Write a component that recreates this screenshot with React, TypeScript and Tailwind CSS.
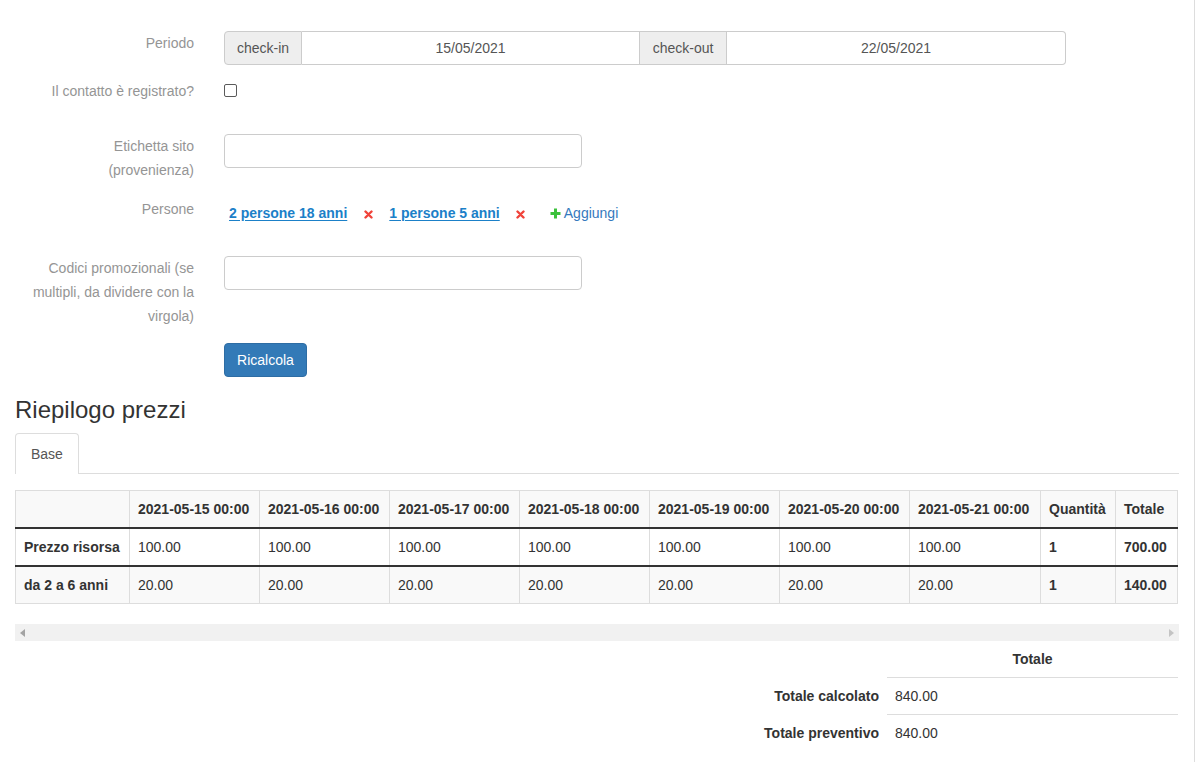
import React from 'react';

const dates = [
  '2021-05-15 00:00',
  '2021-05-16 00:00',
  '2021-05-17 00:00',
  '2021-05-18 00:00',
  '2021-05-19 00:00',
  '2021-05-20 00:00',
  '2021-05-21 00:00',
];

const rows = [
  { label: 'Prezzo risorsa', price: '100.00', qty: '1', total: '700.00', striped: false, thick: true },
  { label: 'da 2 a 6 anni', price: '20.00', qty: '1', total: '140.00', striped: true, thick: false },
];

const RemoveIcon = () => (
  <svg width="9" height="9" viewBox="0 0 9 9" className="block">
    <path d="M1.5 1.5 L7.5 7.5 M7.5 1.5 L1.5 7.5" stroke="#f0433a" strokeWidth="2.4" strokeLinecap="round" />
  </svg>
);

const PlusIcon = () => (
  <svg width="11" height="11" viewBox="0 0 11 11" className="block">
    <path d="M5.5 0.5 V10.5 M0.5 5.5 H10.5" stroke="#3cc13c" strokeWidth="3" />
  </svg>
);

const FormRow: React.FC<{ label?: React.ReactNode; className?: string; children: React.ReactNode }> = ({
  label,
  className = '',
  children,
}) => (
  <div className={`flex items-start ${className}`}>
    <div className="w-[179px] shrink-0 text-right leading-[24px] text-[#959595]">{label}</div>
    <div className="ml-[30px]">{children}</div>
  </div>
);

const App: React.FC = () => {
  const cell = 'border border-[#ddd] px-[8px] py-[8px] leading-[20px] text-left';

  return (
    <div
      className="w-[1195px] min-h-[762px] border-r border-[#ddd] bg-white pl-[15px] pr-[16px] text-[14px] text-[#333]"
      style={{ fontFamily: '"Liberation Sans", Arial, sans-serif' }}
    >
      {/* form */}
      <FormRow label="Periodo" className="pt-[31px]">
        <div className="flex h-[34px] w-[842px] text-[#555]">
          <div className="flex w-[78px] items-center justify-center rounded-l-[4px] border border-[#ccc] bg-[#eee]">
            check-in
          </div>
          <div className="flex w-[338px] items-center justify-center border-y border-r border-[#ccc]">15/05/2021</div>
          <div className="flex w-[87px] items-center justify-center border-y border-r border-[#ccc] bg-[#eee]">
            check-out
          </div>
          <div className="flex w-[339px] items-center justify-center rounded-r-[4px] border-y border-r border-[#ccc]">
            22/05/2021
          </div>
        </div>
      </FormRow>

      <FormRow label="Il contatto è registrato?" className="mt-[14px] h-[40px]">
        <div className="mt-[5px] h-[13px] w-[13px] rounded-[2px] border border-[#5a5a5a] bg-white" />
      </FormRow>

      <FormRow
        label={
          <>
            Etichetta sito
            <br />
            (provenienza)
          </>
        }
        className="mt-[15px]"
      >
        <div className="h-[34px] w-[358px] rounded-[4px] border border-[#ccc]" />
      </FormRow>

      <FormRow label="Persone" className="mt-[15px] h-[44px]">
        <div className="flex items-center pt-[6px] leading-[20px]">
          <a className="ml-[5px] font-bold text-[#1b80c8] underline underline-offset-2">2 persone 18 anni</a>
          <span className="ml-[17px] mt-[2px]">
            <RemoveIcon />
          </span>
          <a className="ml-[16px] font-bold text-[#1b80c8] underline underline-offset-2">1 persone 5 anni</a>
          <span className="ml-[16px] mt-[2px]">
            <RemoveIcon />
          </span>
          <span className="ml-[25px]">
            <PlusIcon />
          </span>
          <a className="ml-[3px] text-[#3579bd]">Aggiungi</a>
        </div>
      </FormRow>

      <FormRow label="Codici promozionali (se multipli, da dividere con la virgola)" className="mt-[15px]">
        <div className="h-[34px] w-[358px] rounded-[4px] border border-[#ccc]" />
      </FormRow>

      <FormRow className="mt-[15px]">
        <button className="h-[34px] w-[83px] rounded-[4px] border border-[#2e6da4] bg-[#337ab7] text-white">
          Ricalcola
        </button>
      </FormRow>

      {/* summary */}
      <h3 className="mt-[20px] mb-[10px] text-[24px] leading-[26px] font-normal text-[#333]">Riepilogo prezzi</h3>

      <div className="flex w-[1164px] border-b border-[#ddd]">
        <div className="-mb-px rounded-t-[4px] border border-b-0 border-[#ddd] bg-white px-[15px] py-[10px] leading-[20px] text-[#555]">
          Base
        </div>
      </div>

      <div className="mt-[16px] w-[1164px]">
        <table className="w-[1163px] table-fixed border-collapse">
          <colgroup>
            <col className="w-[114px]" />
            {dates.map((d, i) => (
              <col key={d} className={i === 6 ? 'w-[131px]' : 'w-[130px]'} />
            ))}
            <col className="w-[75px]" />
            <col className="w-[62px]" />
          </colgroup>
          <thead>
            <tr className="bg-[#f9f9f9]">
              <th className={`${cell} border-b-2 border-b-[#333]`} />
              {dates.map((d) => (
                <th key={d} className={`${cell} border-b-2 border-b-[#333] font-bold whitespace-nowrap`}>
                  {d}
                </th>
              ))}
              <th className={`${cell} border-b-2 border-b-[#333] font-bold`}>Quantità</th>
              <th className={`${cell} border-b-2 border-b-[#333] font-bold`}>Totale</th>
            </tr>
          </thead>
          <tbody>
            {rows.map((r) => {
              const b = r.thick ? 'border-b-2 border-b-[#333]' : '';
              return (
                <tr key={r.label} className={r.striped ? 'bg-[#f9f9f9]' : 'bg-white'}>
                  <td className={`${cell} ${b} font-bold whitespace-nowrap`}>{r.label}</td>
                  {dates.map((d) => (
                    <td key={d} className={`${cell} ${b}`}>
                      {r.price}
                    </td>
                  ))}
                  <td className={`${cell} ${b} font-bold`}>{r.qty}</td>
                  <td className={`${cell} ${b} font-bold`}>{r.total}</td>
                </tr>
              );
            })}
          </tbody>
        </table>

        {/* horizontal scrollbar */}
        <div className="mt-[20px] flex h-[17px] items-center justify-between bg-[#f1f1f1] px-[5px]">
          <svg width="5" height="8" viewBox="0 0 5 8" className="block">
            <path d="M5 0 L0 4 L5 8 Z" fill="#a3a3a3" />
          </svg>
          <svg width="5" height="8" viewBox="0 0 5 8" className="block">
            <path d="M0 0 L5 4 L0 8 Z" fill="#c4c4c4" />
          </svg>
        </div>
      </div>

      {/* totals */}
      <table className="w-[1163px] border-collapse">
        <thead>
          <tr>
            <th className="px-[8px] py-[8px] leading-[20px]" />
            <th className="w-[291px] px-[8px] py-[8px] text-center leading-[20px] font-bold">Totale</th>
          </tr>
        </thead>
        <tbody>
          <tr>
            <th className="px-[8px] py-[8px] text-right leading-[20px] font-bold">Totale calcolato</th>
            <td className="border-t border-[#ddd] px-[8px] py-[8px] leading-[20px]">840.00</td>
          </tr>
          <tr>
            <th className="px-[8px] py-[8px] text-right leading-[20px] font-bold">Totale preventivo</th>
            <td className="border-t border-[#ddd] px-[8px] py-[8px] leading-[20px]">840.00</td>
          </tr>
        </tbody>
      </table>
    </div>
  );
};

export default App;
